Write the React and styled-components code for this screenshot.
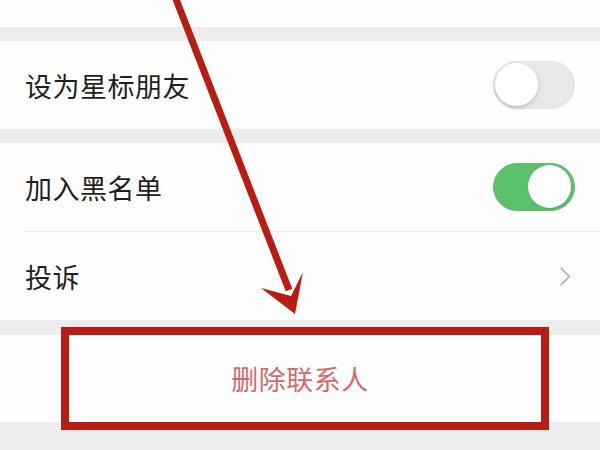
import React from "react";
import styled, { createGlobalStyle } from "styled-components";

const GlobalStyle = createGlobalStyle`
  html, body {
    margin: 0;
    padding: 0;
    background: #ededed;
  }
  body {
    font-family: "Noto Sans CJK SC", "Noto Sans", sans-serif;
  }
`;

export default function App() {
  return (
    <Page>
      <GlobalStyle />
      {/* row above is scrolled mostly off screen */}
      <Group $top={-61}>
        <Row>
          <Label>把他推荐给朋友</Label>
          <Chevron />
        </Row>
      </Group>

      <Group $top={14}>
        <Row>
          <Label>设为星标朋友</Label>
          <Switch />
        </Row>
      </Group>

      <Group $top={14}>
        <Row>
          <Label>加入黑名单</Label>
          <Switch $on />
        </Row>
        <Divider />
        <Row>
          <Label>投诉</Label>
          <Chevron />
        </Row>
      </Group>

      <Group $top={15}>
        <DangerRow>删除联系人</DangerRow>
      </Group>

      {/* annotation overlay */}
      <Highlight />
      <Arrow viewBox="0 0 600 450">
        <line
          x1="174"
          y1="-6"
          x2="289"
          y2="290"
          stroke="#b91c12"
          strokeWidth="7"
        />
        <polygon points="295,314 303,272 291,296 261,288" fill="#b91c12" />
      </Arrow>
    </Page>
  );
}

function Chevron() {
  return (
    <ChevronIcon viewBox="0 0 14 24">
      <polyline
        points="2,2 12,12 2,22"
        fill="none"
        stroke="#b3b3b3"
        strokeWidth="2"
      />
    </ChevronIcon>
  );
}

const Page = styled.div`
  position: relative;
  width: 600px;
  height: 450px;
  overflow: hidden;
  background: #ededed;
  display: flex;
  flex-direction: column;
`;

const Group = styled.div`
  margin-top: ${(p) => p.$top}px;
  background: #fefefe;
  display: flex;
  flex-direction: column;
`;

const Row = styled.div`
  height: 88px;
  padding: 0 22px 0 25px;
  display: flex;
  align-items: center;
  justify-content: space-between;
`;

const Label = styled.span`
  font-size: 27px;
  color: #1f1f1f;
  letter-spacing: 0.5px;
`;

const Divider = styled.div`
  height: 1px;
  margin-left: 24px;
  background: #ececec;
`;

const DangerRow = styled.div`
  height: 87px;
  display: flex;
  align-items: center;
  justify-content: center;
  font-size: 27px;
  color: #d46a6c;
  letter-spacing: 0.5px;
`;

const Switch = styled.div`
  position: relative;
  width: 82px;
  height: 48px;
  border-radius: 24px;
  box-sizing: border-box;
  margin-right: 3px;
  background: ${(p) => (p.$on ? "#5bc06a" : "#e8e8e9")};
  border: 1.5px solid ${(p) => (p.$on ? "#5bc06a" : "#e2e2e2")};

  &::after {
    content: "";
    position: absolute;
    top: 1px;
    left: ${(p) => (p.$on ? "34px" : "1px")};
    width: 43px;
    height: 43px;
    border-radius: 50%;
    background: #fff;
    box-shadow: ${(p) =>
      p.$on ? "0 1px 2px rgba(0,0,0,0.12)" : "0 2px 4px rgba(0,0,0,0.18)"};
  }
`;

const ChevronIcon = styled.svg`
  width: 12px;
  height: 21px;
  margin-right: 7px;
`;

const Highlight = styled.div`
  position: absolute;
  left: 61px;
  top: 327px;
  width: 488px;
  height: 103px;
  box-sizing: border-box;
  border: 8px solid #b91c12;
  pointer-events: none;
`;

const Arrow = styled.svg`
  position: absolute;
  left: 0;
  top: 0;
  width: 600px;
  height: 450px;
  pointer-events: none;
`;
